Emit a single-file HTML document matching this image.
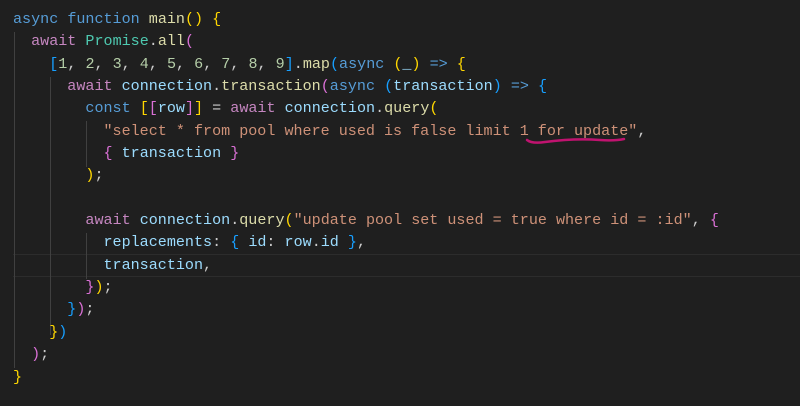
<!DOCTYPE html>
<html><head><style>
html,body{margin:0;padding:0;background:#1f1f1f;width:800px;height:406px;overflow:hidden}
pre{margin:0;position:absolute;left:13px;top:8px;font-family:"Liberation Mono",monospace;font-size:15.08px;line-height:22.35px;color:#cccccc}
.k{color:#569cd6}.a{color:#c586c0}.f{color:#dcdcaa}.c{color:#4ec9b0}.v{color:#9cdcfe}.s{color:#ce9178}.n{color:#b5cea8}
.y{color:#ffd700}.p{color:#da70d6}.b{color:#179fff}
.cur{position:absolute;left:13px;width:787px;top:254px;height:21px;border-top:1px solid #2c2c2c;border-bottom:1px solid #2c2c2c}
.g{position:absolute;width:1px;background:#404040}
</style></head><body>
<div class="cur"></div>
<div class="g" style="left:14px;top:32px;height:336px"></div>
<div class="g" style="left:50px;top:77px;height:258px"></div>
<div class="g" style="left:86px;top:121px;height:46px"></div>
<div class="g" style="left:86px;top:233px;height:46px"></div>
<svg style="position:absolute;left:0;top:0" width="800" height="406"><path d="M527 140 Q532 144 545 142 Q575 138 600 140 Q615 141 624 139" stroke="#c0136f" stroke-width="2.5" fill="none" stroke-linecap="round"/></svg>
<pre><span class="k">async</span> <span class="k">function</span> <span class="f">main</span><span class="y">()</span> <span class="y">{</span>
  <span class="a">await</span> <span class="c">Promise</span>.<span class="f">all</span><span class="p">(</span>
    <span class="b">[</span><span class="n">1</span>, <span class="n">2</span>, <span class="n">3</span>, <span class="n">4</span>, <span class="n">5</span>, <span class="n">6</span>, <span class="n">7</span>, <span class="n">8</span>, <span class="n">9</span><span class="b">]</span>.<span class="f">map</span><span class="b">(</span><span class="k">async</span> <span class="y">(</span><span class="v">_</span><span class="y">)</span> <span class="k">=&gt;</span> <span class="y">{</span>
      <span class="a">await</span> <span class="v">connection</span>.<span class="f">transaction</span><span class="p">(</span><span class="k">async</span> <span class="b">(</span><span class="v">transaction</span><span class="b">)</span> <span class="k">=&gt;</span> <span class="b">{</span>
        <span class="k">const</span> <span class="y">[</span><span class="p">[</span><span class="v">row</span><span class="p">]</span><span class="y">]</span> = <span class="a">await</span> <span class="v">connection</span>.<span class="f">query</span><span class="y">(</span>
          <span class="s">"select * from pool where used is false limit 1 for update"</span>,
          <span class="p">{</span> <span class="v">transaction</span> <span class="p">}</span>
        <span class="y">)</span>;

        <span class="a">await</span> <span class="v">connection</span>.<span class="f">query</span><span class="y">(</span><span class="s">"update pool set used = true where id = :id"</span>, <span class="p">{</span>
          <span class="v">replacements</span>: <span class="b">{</span> <span class="v">id</span>: <span class="v">row</span>.<span class="v">id</span> <span class="b">}</span>,
          <span class="v">transaction</span>,
        <span class="p">}</span><span class="y">)</span>;
      <span class="b">}</span><span class="p">)</span>;
    <span class="y">}</span><span class="b">)</span>
  <span class="p">)</span>;
<span class="y">}</span></pre>
</body></html>
